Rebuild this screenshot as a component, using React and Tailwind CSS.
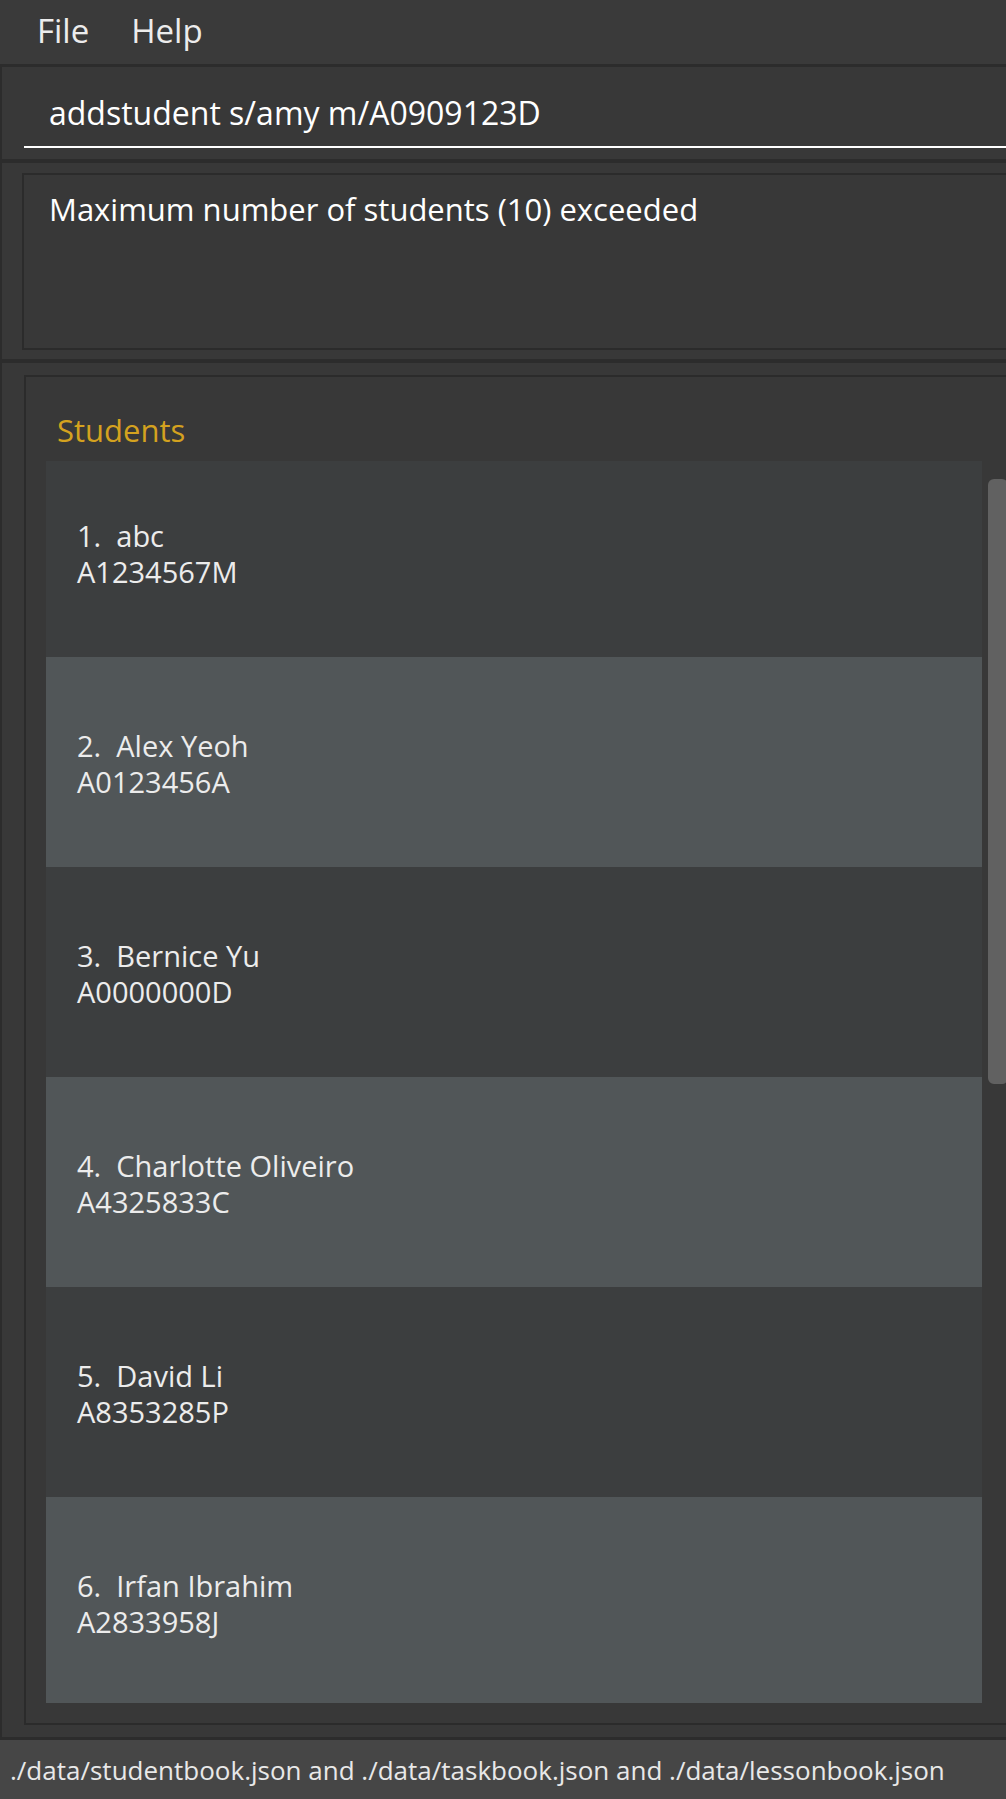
import React from "react";

const students = [
  { name: "abc", id: "A1234567M" },
  { name: "Alex Yeoh", id: "A0123456A" },
  { name: "Bernice Yu", id: "A0000000D" },
  { name: "Charlotte Oliveiro", id: "A4325833C" },
  { name: "David Li", id: "A8353285P" },
  { name: "Irfan Ibrahim", id: "A2833958J" },
];

export default function App() {
  return (
    <div className="w-[1006px] h-[1799px] overflow-hidden bg-[#2c2c2c] font-['Open_Sans',sans-serif]">
      <div className="w-[1040px] h-full flex flex-col">
        {/* Menu bar */}
        <div className="h-[64px] shrink-0 bg-[#3a3a3a] flex items-start pt-[11px] text-[33px] leading-[40px] text-[#ececec]">
          <span className="ml-[37px]">File</span>
          <span className="ml-[42px]">Help</span>
        </div>

        {/* Command box */}
        <div className="mt-[3px] ml-[2px] h-[92px] shrink-0 bg-[#383838] pl-[22px] pt-[26px]">
          <div className="pb-[13px] border-b-2 border-white pl-[25px] text-[32px] leading-[40px] text-white">
            addstudent s/amy m/A0909123D
          </div>
        </div>

        {/* Result display */}
        <div className="mt-[4px] ml-[2px] h-[196px] shrink-0 bg-[#383838] pt-[10px] pl-[20px]">
          <div className="h-[177px] border-2 border-[#2b2b2b] pl-[25px] pt-[14px] text-[31px] leading-[40px] text-white">
            Maximum number of students (10) exceeded
          </div>
        </div>

        {/* Students panel */}
        <div className="mt-[4px] ml-[2px] h-[1374px] shrink-0 bg-[#383838] pt-[12px] pl-[22px] pb-[12px]">
          <div className="h-full border-2 border-[#2b2b2b] flex flex-col">
            <div className="pl-[31px] pt-[33px] text-[31px] leading-[40px] text-[#d4a21f]">
              Students
            </div>
            <div className="mt-[11px] pl-[20px] h-[1242px] flex">
              <div className="w-[936px] h-full overflow-hidden">
                <div className="-mt-[14px]">
                  {students.map((s, i) => (
                    <div
                      key={i}
                      className={
                        "h-[210px] flex flex-col justify-center pl-[31px] pt-[3px] text-[29px] leading-[36px] text-[#ececec] " +
                        (i % 2 === 0 ? "bg-[#3c3e3f]" : "bg-[#515658]")
                      }
                    >
                      <div className="whitespace-pre">{`${i + 1}.  ${s.name}`}</div>
                      <div>{s.id}</div>
                    </div>
                  ))}
                </div>
              </div>
              <div className="ml-[6px] pt-[18px]">
                <div className="w-[20px] h-[605px] rounded-[6px] bg-[#616161]" />
              </div>
            </div>
          </div>
        </div>

        {/* Status bar */}
        <div className="mt-[3px] h-[59px] shrink-0 bg-[#464646] pl-[10px] pt-[12px] text-[26px] leading-[36px] text-[#e8e8e8] whitespace-nowrap">
          ./data/studentbook.json and ./data/taskbook.json and ./data/lessonbook.json
        </div>
      </div>
    </div>
  );
}
